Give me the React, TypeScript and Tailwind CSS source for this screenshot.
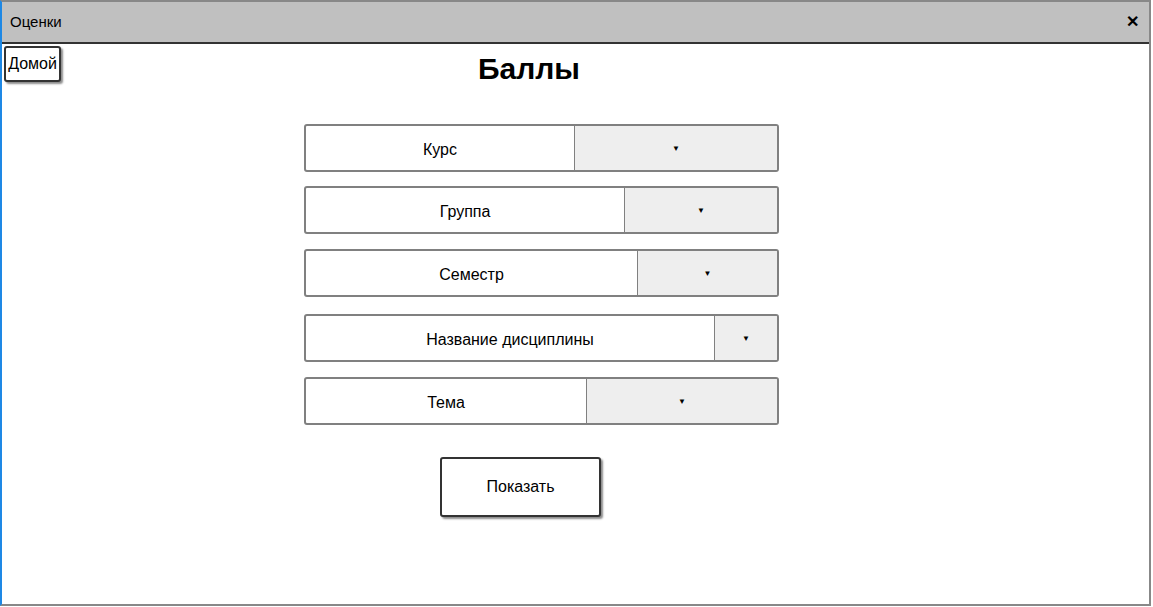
import React from "react";

const fields = [
  { label: "Курс", split: 268, top: "mt-[37px]" },
  { label: "Группа", split: 318, top: "mt-[14px]" },
  { label: "Семестр", split: 331, top: "mt-[15px]" },
  { label: "Название дисциплины", split: 408, top: "mt-[17px]" },
  { label: "Тема", split: 280, top: "mt-[15px]" },
];

function Select({ label, split, top }: { label: string; split: number; top: string }) {
  return (
    <div
      className={`${top} flex h-[48px] w-[475px] rounded-[3px] border-2 border-[#808080] bg-white overflow-hidden`}
    >
      <div
        className="flex items-center justify-center pt-[3px] text-[16px] text-black shrink-0"
        style={{ width: split }}
      >
        {label}
      </div>
      <div className="flex flex-1 items-center justify-center border-l border-[#808080] bg-[#eeeeee] pt-[2px]">
        <span className="text-[8px] leading-none text-black">▼</span>
      </div>
    </div>
  );
}

export default function App() {
  return (
    <div className="h-[607px] w-[1153px] bg-white font-['Liberation_Sans',sans-serif]">
      <div className="flex h-[606px] w-[1151px] flex-col border-t-2 border-r-2 border-b-2 border-l-2 border-t-[#888] border-r-[#888] border-b-[#888] border-l-[#1e88e5]">
        {/* title bar */}
        <div className="flex h-[42px] shrink-0 items-center justify-between border-b-2 border-[#333] bg-[#c0c0c0] pl-[8px] pr-[10px]">
          <span className="text-[15px] text-black">Оценки</span>
          <span className="text-[16px] font-bold text-black">✕</span>
        </div>

        {/* body */}
        <div className="flex flex-1 flex-col">
          <div className="flex items-start">
            <button className="ml-[2px] mt-[2px] flex h-[36px] w-[57px] items-center justify-center rounded-[3px] border-2 border-[#333] bg-white text-[16px] text-black shadow-[2px_2px_2px_rgba(0,0,0,0.45)]">
              Домой
            </button>
            <h1 className="ml-[417px] mt-[7px] text-[30px] font-bold leading-[36px] text-black">Баллы</h1>
          </div>

          <div className="ml-[302px] flex flex-col">
            {fields.map((f) => (
              <Select key={f.label} label={f.label} split={f.split} top={f.top} />
            ))}
          </div>

          <button className="ml-[438px] mt-[32px] flex h-[60px] w-[161px] items-center justify-center rounded-[3px] border-2 border-[#333] bg-white text-[16px] text-black shadow-[2px_2px_2px_rgba(0,0,0,0.45)]">
            Показать
          </button>
        </div>
      </div>
    </div>
  );
}
